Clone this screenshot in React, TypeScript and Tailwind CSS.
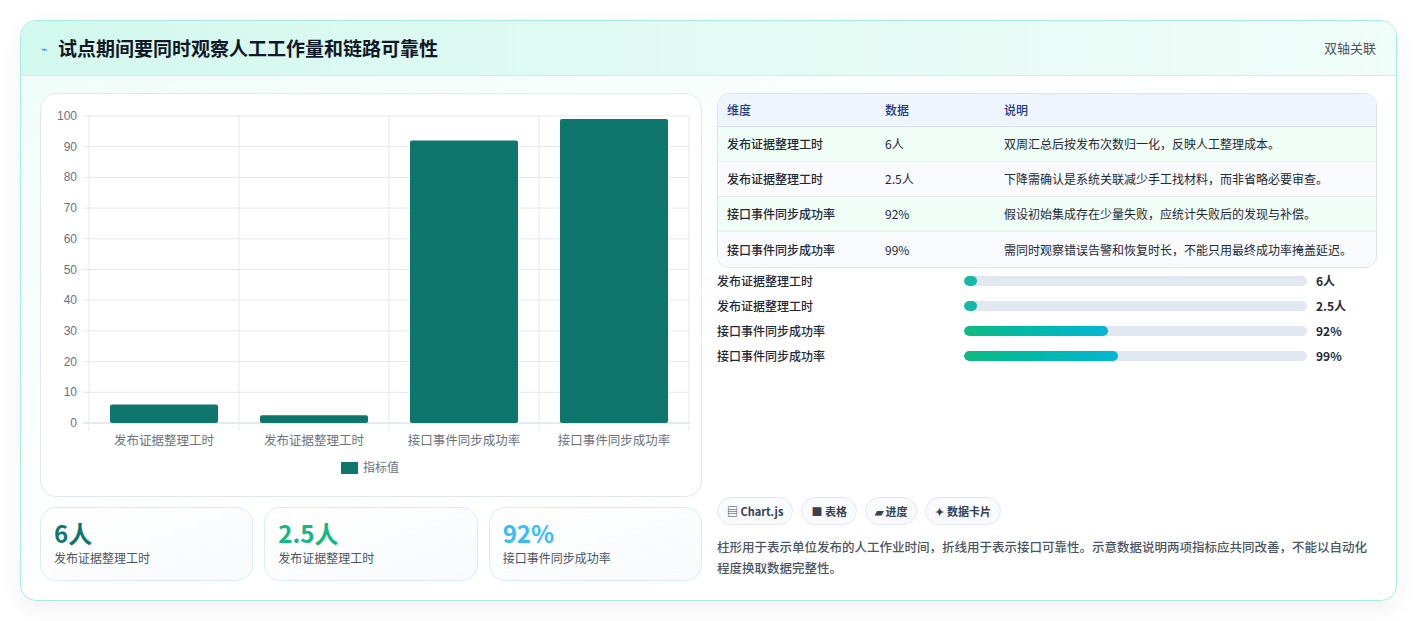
import React from 'react';

const font = { fontFamily: '"Noto Sans CJK SC", "Noto Sans", sans-serif' };

const rows = [
  { dim: '发布证据整理工时', val: '6人', note: '双周汇总后按发布次数归一化，反映人工整理成本。', pct: 2, bar: 'bg-[#14b8a6]' },
  { dim: '发布证据整理工时', val: '2.5人', note: '下降需确认是系统关联减少手工找材料，而非省略必要审查。', pct: 2, bar: 'bg-[#14b8a6]' },
  { dim: '接口事件同步成功率', val: '92%', note: '假设初始集成存在少量失败，应统计失败后的发现与补偿。', pct: 42, bar: 'bg-gradient-to-r from-[#10b981] to-[#06b6d4]' },
  { dim: '接口事件同步成功率', val: '99%', note: '需同时观察错误告警和恢复时长，不能只用最终成功率掩盖延迟。', pct: 45, bar: 'bg-gradient-to-r from-[#10b981] to-[#06b6d4]' },
];

function BarChart() {
  const left = 48, right = 648, top = 22, bottom = 329;
  const y = (v: number) => bottom - ((bottom - top) * v) / 100;
  const values = [6, 2.5, 92, 99];
  const labels = ['发布证据整理工时', '发布证据整理工时', '接口事件同步成功率', '接口事件同步成功率'];
  const step = (right - left) / 4;
  return (
    <svg width="661" height="401" className="block" style={font}>
      {[0, 10, 20, 30, 40, 50, 60, 70, 80, 90, 100].map((t) => (
        <g key={t}>
          <line x1={left - 6} x2={right} y1={y(t)} y2={y(t)} stroke={t === 0 ? '#cbd5e1' : '#e5e7eb'} />
          <text x={left - 12} y={y(t) + 4} textAnchor="end" fontSize="12" fill="#6b7280" fontFamily="Liberation Sans, sans-serif">{t}</text>
        </g>
      ))}
      {[0, 1, 2, 3, 4].map((i) => (
        <line key={i} x1={left + i * step} x2={left + i * step} y1={top} y2={bottom + 8} stroke="#e5e7eb" />
      ))}
      {values.map((v, i) => (
        <rect key={i} x={left + i * step + 21} width={108} y={y(v)} height={bottom - y(v)} rx={2} fill="#0f766e" />
      ))}
      {labels.map((l, i) => (
        <text key={i} x={left + i * step + step / 2} y={351} textAnchor="middle" fontSize="12.5" fill="#6b7280">{l}</text>
      ))}
      <rect x={300} y={368} width={17} height={12} fill="#0f766e" />
      <text x={322} y={378} fontSize="12" fill="#6b7280">指标值</text>
    </svg>
  );
}

export default function App() {
  return (
    <div className="min-h-screen bg-white px-5 pt-5" style={font}>
      <div className="w-[1377px] overflow-hidden rounded-2xl border border-[#a7ece0] bg-gradient-to-br from-[#effdf8] via-white to-white shadow-[0_8px_24px_rgba(0,0,0,0.06)]">
        <div className="flex h-[55px] items-center justify-between border-b border-[#c9f1e6] bg-gradient-to-r from-[#d3f8ee] to-[#f0fdf9] px-5">
          <div className="flex items-center gap-2.5">
            <span className="text-[11px] text-[#3b82f6]">⌁</span>
            <h1 className="text-[19px] font-bold text-[#111827]">试点期间要同时观察人工工作量和链路可靠性</h1>
          </div>
          <span className="text-[13px] text-[#4b5563]">双轴关联</span>
        </div>
        <div className="flex gap-[15px] px-[19px] pb-[19px] pt-[17px]">
          <div className="w-[662px] shrink-0">
            <div className="h-[404px] rounded-2xl border border-[#e2e8f0] bg-white">
              <BarChart />
            </div>
            <div className="mt-[10px] grid grid-cols-3 gap-[11px]">
              {[
                { v: '6人', c: 'text-[#0f766e]', l: '发布证据整理工时' },
                { v: '2.5人', c: 'text-[#10b981]', l: '发布证据整理工时' },
                { v: '92%', c: 'text-[#38bdf8]', l: '接口事件同步成功率' },
              ].map((s, i) => (
                <div key={i} className="h-[74px] rounded-2xl border border-[#dbeafe] bg-gradient-to-br from-white to-[#f8fafc] px-[13px] pt-[9px]">
                  <div className={`text-[24px] font-bold leading-[32px] ${s.c}`}>{s.v}</div>
                  <div className="text-[12px] text-[#4b5563]">{s.l}</div>
                </div>
              ))}
            </div>
          </div>
          <div className="flex-1">
            <div className="overflow-hidden rounded-xl border border-[#dbe3ee] bg-white text-[12px]">
              <div className="flex h-[33px] items-center border-b border-[#dbe3ee] bg-[#eef5fd] px-[9px] font-medium text-[#1e3a8a]">
                <span className="w-[158px]">维度</span><span className="w-[119px]">数据</span><span>说明</span>
              </div>
              {rows.map((r, i) => (
                <div key={i} className={`flex h-[35px] items-center px-[9px] text-[#1f2937] ${i < 3 ? 'border-b border-[#e8edf3]' : ''} ${i % 2 === 0 ? 'bg-[#f0fdf6]' : 'bg-[#f8fafc]'}`}>
                  <span className="w-[158px] font-medium">{r.dim}</span><span className="w-[119px]">{r.val}</span><span>{r.note}</span>
                </div>
              ))}
            </div>
            <div className="mt-[7px] flex flex-col gap-[13px]">
              {rows.map((r, i) => (
                <div key={i} className="flex h-[12px] items-center text-[12px] font-medium text-[#1f2937]">
                  <span className="w-[247px]">{r.dim}</span>
                  <div className="h-[10px] w-[343px] overflow-hidden rounded-full bg-[#e2e8f0]">
                    <div className={`h-full min-w-[13px] rounded-full ${r.bar}`} style={{ width: `${r.pct}%` }} />
                  </div>
                  <span className="ml-[9px] font-bold">{r.val}</span>
                </div>
              ))}
            </div>
            <div className="mt-[135px] flex gap-[8px] text-[11px] font-bold text-[#374151]">
              {['▤ Chart.js', '■ 表格', '▰ 进度', '✦ 数据卡片'].map((p) => (
                <span key={p} className="flex h-[28px] items-center rounded-full border border-[#e5e7eb] bg-[#f9fafb] px-[9px]">{p}</span>
              ))}
            </div>
            <p className="mt-[11px] text-[12.5px] font-medium leading-[21px] text-[#4b5563]">
              柱形用于表示单位发布的人工作业时间，折线用于表示接口可靠性。示意数据说明两项指标应共同改善，不能以自动化程度换取数据完整性。
            </p>
          </div>
        </div>
      </div>
    </div>
  );
}
